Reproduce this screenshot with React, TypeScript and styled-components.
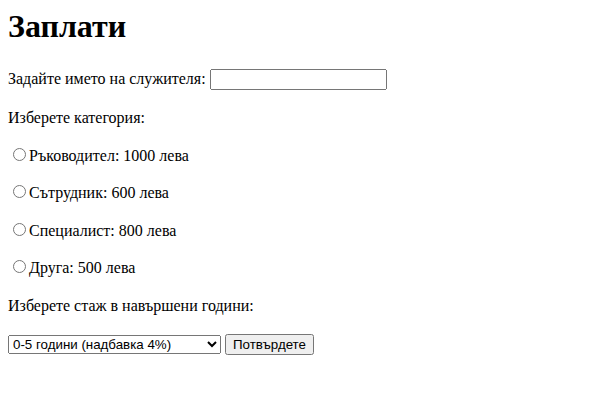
import React from "react";
import styled, { createGlobalStyle } from "styled-components";

const Global = createGlobalStyle`
  body {
    margin: 8px;
    font-family: "Liberation Serif", "Times New Roman", serif;
    font-size: 16px;
    line-height: 21.6px;
    color: #000;
    background: #fff;
  }
`;

const Title = styled.h1`
  font-size: 2em;
  line-height: normal;
  font-weight: bold;
  margin: 0 0 22.5px;
`;

const Para = styled.p<{ $extra?: number }>`
  margin: 1em 0 ${(p) => 16 + (p.$extra ?? 0)}px;
`;

const TextInput = styled.input`
  box-sizing: border-box;
  width: 177px;
  height: 21px;
  font-family: "Liberation Sans", Arial, sans-serif;
  font-size: 13.3333px;
`;

const Radio = styled.input`
  margin: 3px 3px 0 5px;
`;

const Select = styled.select`
  box-sizing: border-box;
  width: 213px;
  height: 19px;
  font-family: "Liberation Sans", Arial, sans-serif;
  font-size: 13.3333px;
`;

const Button = styled.button`
  box-sizing: border-box;
  width: 89px;
  height: 21px;
  font-family: "Liberation Sans", Arial, sans-serif;
  font-size: 13.3333px;
`;

const categories = [
  "Ръководител: 1000 лева",
  "Сътрудник: 600 лева",
  "Специалист: 800 лева",
  "Друга: 500 лева",
];

export default function App() {
  return (
    <>
      <Global />
      <Title>Заплати</Title>
      <form onSubmit={(e) => e.preventDefault()}>
        <Para $extra={1.5}>
          Задайте името на служителя: <TextInput type="text" />
        </Para>
        <Para>Изберете категория:</Para>
        {categories.map((c) => (
          <Para key={c}>
            <Radio type="radio" name="cat" />
            {c}
          </Para>
        ))}
        <Para>Изберете стаж в навършени години:</Para>
        <Select defaultValue="a">
          <option value="a">0-5 години (надбавка 4%)</option>
          <option value="b">5-10 години (надбавка 7%)</option>
          <option value="c">10-20 години (надбавка 10%)</option>
          <option value="d">над 20 години (надбавка 15%)</option>
        </Select>{" "}
        <Button type="submit">Потвърдете</Button>
      </form>
    </>
  );
}
